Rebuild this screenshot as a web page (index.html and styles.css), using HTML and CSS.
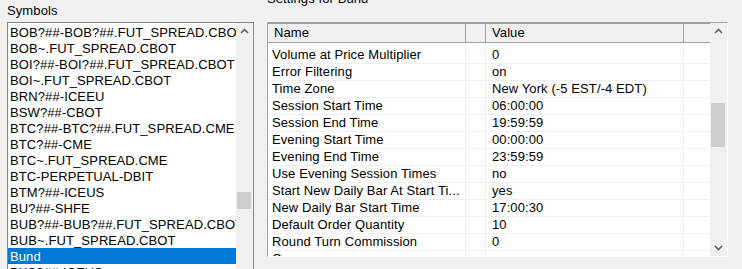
FILE: index.html
```html
<!DOCTYPE html>
<html lang="en">
<head>
    <meta charset="UTF-8">
    <meta name="viewport" content="width=device-width, initial-scale=1.0">
    <title>Symbol Settings</title>
    <link rel="stylesheet" href="styles.css">
</head>
<body>
    <div class="window">
        <div class="symbols-panel">
            <div class="label">Symbols</div>
            <div class="listbox">
                <ul class="symbol-list">
                    <li>BOB?##-BOB?##.FUT_SPREAD.CBOT</li>
                    <li>BOB~.FUT_SPREAD.CBOT</li>
                    <li>BOI?##-BOI?##.FUT_SPREAD.CBOT</li>
                    <li>BOI~.FUT_SPREAD.CBOT</li>
                    <li>BRN?##-ICEEU</li>
                    <li>BSW?##-CBOT</li>
                    <li>BTC?##-BTC?##.FUT_SPREAD.CME</li>
                    <li>BTC?##-CME</li>
                    <li>BTC~.FUT_SPREAD.CME</li>
                    <li>BTC-PERPETUAL-DBIT</li>
                    <li>BTM?##-ICEUS</li>
                    <li>BU?##-SHFE</li>
                    <li>BUB?##-BUB?##.FUT_SPREAD.CBOT</li>
                    <li>BUB~.FUT_SPREAD.CBOT</li>
                    <li class="selected">Bund</li>
                    <li>BXS?##-ICEUS</li>
                </ul>
                <div class="scrollbar list-scroll">
                    <svg class="arrow" width="17" height="17" viewBox="0 0 17 17"><polyline points="5,10 8.5,6.5 12,10" /></svg>
                    <div class="track"><div class="thumb"></div></div>
                </div>
            </div>
        </div>

        <div class="settings-panel">
            <div class="label settings-label">Settings for Bund</div>
            <div class="grid">
                <div class="grid-body">
                    <div class="grid-head">
                        <div class="cell name">Name</div>
                        <div class="cell gap"></div>
                        <div class="cell value">Value</div>
                        <div class="cell rest"></div>
                    </div>
                    <div class="grid-rows" id="gridRows"></div>
                </div>
                <div class="scrollbar grid-scroll">
                    <svg class="arrow" width="17" height="17" viewBox="0 0 17 17"><polyline points="5,10 8.5,6.5 12,10" /></svg>
                    <div class="track"><div class="thumb"></div></div>
                    <svg class="arrow" width="17" height="17" viewBox="0 0 17 17"><polyline points="5,7 8.5,10.5 12,7" /></svg>
                </div>
            </div>
        </div>
    </div>

    <script>
        const settings = [
            ['Volume at Price Multiplier', '0'],
            ['Error Filtering', 'on'],
            ['Time Zone', 'New York (-5 EST/-4 EDT)'],
            ['Session Start Time', '06:00:00'],
            ['Session End Time', '19:59:59'],
            ['Evening Start Time', '00:00:00'],
            ['Evening End Time', '23:59:59'],
            ['Use Evening Session Times', 'no'],
            ['Start New Daily Bar At Start Ti...', 'yes'],
            ['New Daily Bar Start Time', '17:00:30'],
            ['Default Order Quantity', '10'],
            ['Round Turn Commission', '0'],
            ['Currency', 'none']
        ];

        const gridRows = document.getElementById('gridRows');

        settings.forEach(function (item) {
            const row = document.createElement('div');
            row.className = 'grid-row';
            row.innerHTML = `
                <div class="cell name">${item[0]}</div>
                <div class="cell gap"></div>
                <div class="cell value">${item[1]}</div>
                <div class="cell rest"></div>
            `;
            gridRows.appendChild(row);
        });
    </script>
</body>
</html>
```

FILE: styles.css
```css
* {
    margin: 0;
    padding: 0;
    box-sizing: border-box;
}

body {
    font-family: 'Liberation Sans', Arial, sans-serif;
    font-size: 13px;
    letter-spacing: 0.1px;
    color: #000;
    background-color: #f0f0f0;
    height: 269px;
    overflow: hidden;
}

.window {
    display: flex;
    gap: 13px;
    padding: 3px 0 0 7px;
}

.label {
    height: 15px;
    line-height: 15px;
    margin-bottom: 4px;
}

/* symbol list */

.symbols-panel {
    width: 247px;
}

.listbox {
    display: flex;
    height: 270px;
    border: 1px solid #828790;
    background-color: #fff;
}

.symbol-list {
    list-style: none;
    width: 228px;
    padding-top: 1px;
    overflow: hidden;
}

.symbol-list li {
    height: 16px;
    line-height: 15px;
    padding: 1px 0 0 2px;
    white-space: nowrap;
    overflow: hidden;
}

.symbol-list li.selected {
    background-color: #0078d7;
    color: #fff;
}

/* scrollbars */

.scrollbar {
    display: flex;
    flex-direction: column;
    width: 17px;
    background-color: #f0f0f0;
}

.scrollbar .arrow {
    display: block;
    flex: none;
}

.scrollbar .arrow polyline {
    fill: none;
    stroke: #606060;
    stroke-width: 1.6;
}

.scrollbar .track {
    flex: 1;
    position: relative;
}

.scrollbar .thumb {
    position: absolute;
    left: 1px;
    right: 2px;
    background-color: #cdcdcd;
}

.list-scroll .thumb {
    top: 152px;
    height: 17px;
}

.grid-scroll .thumb {
    top: 63px;
    height: 44px;
}

/* settings grid */

.settings-panel {
    width: 461px;
}

.settings-label {
    margin-top: -12px;
    margin-bottom: 16px;
}

.grid {
    display: flex;
    height: 235px;
    border: 1px solid;
    border-color: #a0a0a0 #fff #fff #a0a0a0;
    background-color: #fff;
}

.grid-body {
    flex: 1;
    overflow: hidden;
}

.grid-head,
.grid-row {
    display: flex;
}

.cell {
    flex: none;
    white-space: nowrap;
    overflow: hidden;
}

.cell.name {
    width: 198px;
    padding-left: 4px;
}

.cell.gap {
    width: 20px;
}

.cell.value {
    width: 198px;
    padding-left: 6px;
}

.cell.rest {
    flex: 1;
}

.grid-head {
    height: 20px;
    background-color: #f0f0f0;
    border-top: 1px solid #a0a0a0;
    border-bottom: 1px solid #a0a0a0;
}

.grid-head .cell {
    line-height: 18px;
    border-right: 1px solid #a0a0a0;
}

.grid-head .cell.name {
    padding-left: 6px;
}

.grid-head .cell.rest {
    border-right: none;
}

.grid-rows {
    padding-top: 4px;
}

.grid-row {
    height: 17px;
    border-bottom: 1px solid #f0f0f0;
}

.grid-row .cell {
    line-height: 16px;
    border-right: 1px solid #f0f0f0;
}

.grid-row .cell.rest {
    border-right: none;
}
```
